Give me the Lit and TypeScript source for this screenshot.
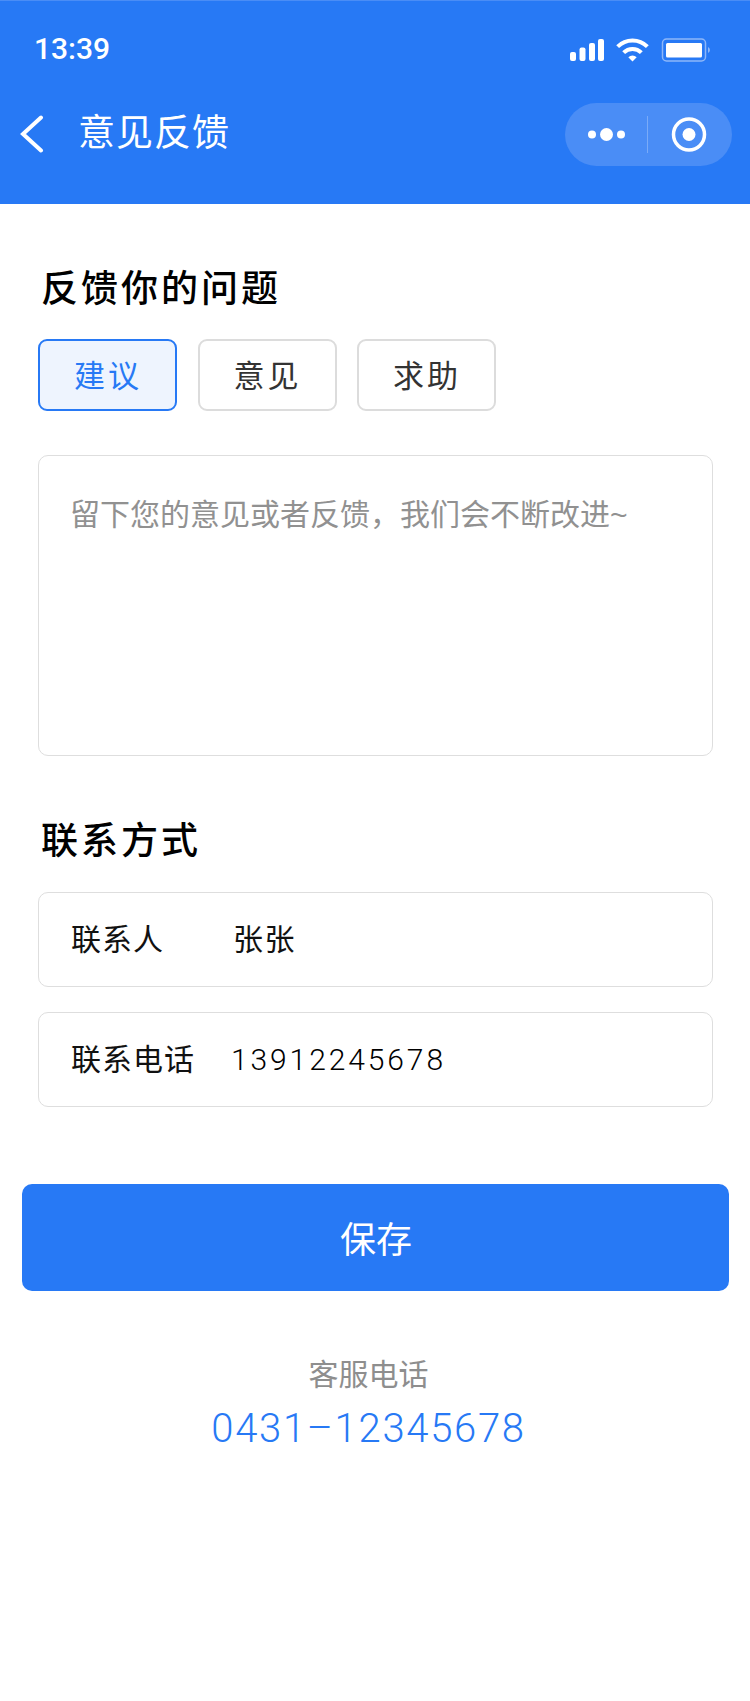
import { LitElement, css, html } from "lit";
import { customElement, state } from "lit/decorators.js";
import { classMap } from "lit/directives/class-map.js";

const CHIPS = ["建议", "意见", "求助"];
const PLACEHOLDER = "留下您的意见或者反馈\uFF0C我们会不断改进~";

@customElement("app-root")
export class AppRoot extends LitElement {
  static styles = css`
    :host {
      display: block;
      width: 750px;
      min-height: 1701px;
      background: #fff;
      font-family: "Liberation Sans", "Noto Sans CJK SC", sans-serif;
      color: #000;
    }

    .header {
      height: 204px;
      box-sizing: border-box;
      background: #2779f5;
      border-top: 1px solid #4a8df6;
      color: #fff;
    }

    .status {
      height: 94px;
      padding: 3px 39px 0 34px;
      display: flex;
      align-items: center;
      justify-content: space-between;
      box-sizing: border-box;
    }

    .time {
      font-family: Roboto, sans-serif;
      font-weight: 500;
      font-size: 30px;
      line-height: 34px;
      margin-bottom: 2px;
    }

    .nav {
      height: 78px;
      padding: 0 18px;
      display: flex;
      align-items: center;
    }

    .title {
      margin-left: 34px;
      font-size: 37px;
      letter-spacing: 1px;
      line-height: 48px;
      flex: 1;
    }

    .capsule {
      display: block;
    }

    .main {
      padding: 0 37px 0 38px;
    }

    h2 {
      margin: 0;
      font-size: 37px;
      line-height: 50px;
      font-weight: 500;
      letter-spacing: 3px;
      padding-left: 3px;
    }

    .section-one {
      padding-top: 61px;
    }

    .chips {
      display: flex;
      gap: 20.5px;
      margin-top: 24px;
    }

    .chip {
      width: 139px;
      height: 72px;
      box-sizing: border-box;
      border: 2px solid #dcdcdc;
      border-radius: 9px;
      padding: 0 0 3px 1px;
      display: flex;
      align-items: center;
      justify-content: center;
      font-size: 31px;
      letter-spacing: 3px;
      color: #333;
      cursor: pointer;
    }

    .chip.active {
      background: #eef4fe;
      border-color: #2779f5;
      color: #2779f5;
    }

    .note {
      margin-top: 44px;
      height: 301px;
      box-sizing: border-box;
      border: 1px solid #dedede;
      border-radius: 10px;
      padding: 39px 31px;
      font-size: 30px;
      line-height: 40px;
      color: #919191;
    }

    .section-two {
      margin-top: 61px;
    }

    .rows {
      margin-top: 25px;
      display: flex;
      flex-direction: column;
      gap: 25px;
    }

    .row {
      height: 95px;
      box-sizing: border-box;
      border: 1px solid #dedede;
      border-radius: 10px;
      padding: 0 32px;
      display: flex;
      align-items: center;
      font-size: 30px;
      line-height: 40px;
      color: #111;
    }

    .label {
      width: 162px;
      letter-spacing: 1px;
    }

    .value {
      letter-spacing: 1.5px;
    }

    .value.digits {
      margin-left: -2px;
      font-family: Roboto, sans-serif;
      font-weight: 300;
      letter-spacing: 2.9px;
      color: #000;
    }

    .save {
      display: flex;
      align-items: center;
      justify-content: center;
      margin: 77px 21px 0 22px;
      padding: 0 0 1px 1px;
      box-sizing: border-box;
      height: 107px;
      border-radius: 10px;
      background: #2779f5;
      color: #fff;
      font-size: 36px;
    }

    .service {
      margin-top: 66px;
      padding-right: 13px;
      text-align: center;
    }

    .service-label {
      font-size: 30px;
      line-height: 36px;
      color: #8e8e8e;
    }

    .service-phone {
      margin-top: 11px;
      font-family: Roboto, sans-serif;
      font-weight: 300;
      font-size: 40px;
      line-height: 50px;
      letter-spacing: 1.7px;
      color: #2779f5;
    }
  `;

  @state()
  selected = 0;

  render() {
    return html`
      <div class="header">
        <div class="status">
          <span class="time">13:39</span>
          <svg width="141" height="24" viewBox="0 0 141 24" fill="#fff">
            <rect x="0" y="14" width="6" height="9" rx="2" />
            <rect x="9.500" y="9.500" width="6" height="13.500" rx="2" />
            <rect x="19" y="5" width="6" height="18" rx="2" />
            <rect x="28" y="1" width="6" height="22" rx="2" />
            <path
              d="M47.650 8.650a21 21 0 0 1 29.700 0"
              fill="none"
              stroke="#fff"
              stroke-width="4"
            />
            <path
              d="M53.660 14.660a12.500 12.500 0 0 1 17.680 0"
              fill="none"
              stroke="#fff"
              stroke-width="4"
            />
            <path d="M58.300 19.300a6 6 0 0 1 8.400 0l-4.200 4.200z" />
            <rect
              x="92.500"
              y="1"
              width="43"
              height="22"
              rx="4"
              fill="none"
              stroke="#8db7f9"
              stroke-width="1.500"
            />
            <rect x="96" y="5" width="36" height="14.500" rx="1.500" />
            <path d="M138 9a4 3.500 0 0 1 0 6z" fill="#8db7f9" />
          </svg>
        </div>
        <div class="nav">
          <svg width="26" height="38" viewBox="0 0 26 38">
            <path
              d="M23 2.500 5 19l18 16.500"
              fill="none"
              stroke="#fff"
              stroke-width="4"
              stroke-linecap="round"
            />
          </svg>
          <span class="title">意见反馈</span>
          <svg class="capsule" width="167" height="63" viewBox="0 0 167 63">
            <rect width="167" height="63" rx="31.500" fill="#4a8df6" />
            <circle cx="27" cy="31.500" r="4" fill="#fff" />
            <circle cx="41.500" cy="31.500" r="6.500" fill="#fff" />
            <circle cx="56" cy="31.500" r="4" fill="#fff" />
            <rect x="82" y="13" width="1" height="37" fill="#7aabf8" />
            <circle
              cx="124"
              cy="31.500"
              r="15.500"
              fill="none"
              stroke="#fff"
              stroke-width="3.500"
            />
            <circle cx="124" cy="31.500" r="6.500" fill="#fff" />
          </svg>
        </div>
      </div>

      <div class="main">
        <section class="section-one">
          <h2>反馈你的问题</h2>
          <div class="chips">
            ${CHIPS.map(
              (chip, i) => html`
                <div
                  class=${classMap({ chip: true, active: i === this.selected })}
                  @click=${() => (this.selected = i)}
                >
                  ${chip}
                </div>
              `,
            )}
          </div>
          <div class="note">${PLACEHOLDER}</div>
        </section>

        <section class="section-two">
          <h2>联系方式</h2>
          <div class="rows">
            <div class="row">
              <span class="label">联系人</span>
              <span class="value">张张</span>
            </div>
            <div class="row">
              <span class="label">联系电话</span>
              <span class="value digits">13912245678</span>
            </div>
          </div>
        </section>
      </div>

      <div class="save">保存</div>

      <div class="service">
        <div class="service-label">客服电话</div>
        <div class="service-phone">0431–12345678</div>
      </div>
    `;
  }
}
